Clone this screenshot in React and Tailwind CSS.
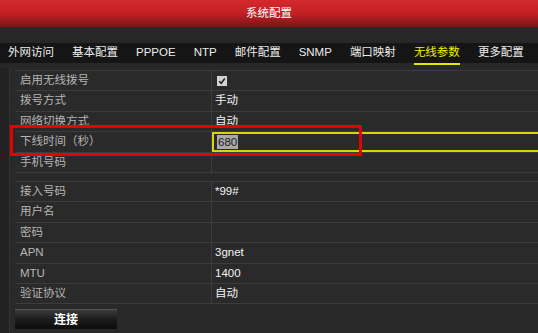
import React from "react";

const font = { fontFamily: '"Liberation Sans", "Noto Sans CJK SC", sans-serif' };

function Row({ label, children, highlight }) {
  return (
    <div className="flex h-[20.4px] border-t border-[#3c3c3c]">
      <div className="w-[197px] shrink-0 flex items-center pl-[5px] text-[11.5px] text-[#b4b4b4] border-r border-[#3c3c3c]">
        {label}
      </div>
      <div
        className={
          "flex-1 flex items-center pl-[3px] text-[11.5px] text-[#f2f2f2] " +
          (highlight ? "border-y-2 border-l-2 border-[#d6d600]" : "")
        }
      >
        {children}
      </div>
    </div>
  );
}

function Check() {
  return (
    <div className="ml-[2px] w-[10px] h-[10px] bg-[#d2d2d2] flex items-center justify-center">
      <svg width="8" height="8" viewBox="0 0 8 8">
        <path d="M1.2 4.2 L3.2 6.2 L6.8 1.6" stroke="#222" strokeWidth="1.6" fill="none" />
      </svg>
    </div>
  );
}

export default function App() {
  const tabs = ["外网访问", "基本配置", "PPPOE", "NTP", "邮件配置", "SNMP", "端口映射", "无线参数", "更多配置"];
  return (
    <div className="relative w-[538px] h-[333px] overflow-hidden bg-[#222222]" style={font}>
      <div className="h-[27px] flex items-center justify-center bg-gradient-to-b from-[#d42a2e] via-[#c21f24] to-[#7c1414] text-white text-[11.5px]">
        系统配置
      </div>
      <div className="h-[16px] bg-[#272727]" />
      <div className="h-[20px] bg-[#151515] flex items-center pl-[8px] gap-[18px] whitespace-nowrap">
        {tabs.map((t) => (
          <div key={t} className={"relative text-[11.5px] " + (t === "无线参数" ? "text-[#f0f000]" : "text-[#ececec]")}>
            {t}
            {t === "无线参数" && <div className="absolute left-0 right-0 bottom-[-3px] h-[2px] bg-[#e6e600]" />}
          </div>
        ))}
      </div>
      <div className="h-[5px] bg-[#282828]" />
      <div className="ml-[9px] h-[265px] bg-[#292929] border-l border-[#333] pl-[5px] pt-[2px]">
        <div className="border-b border-[#3c3c3c] bg-[#2a2a2a]">
          <Row label="启用无线拨号"><Check /></Row>
          <Row label="拨号方式">手动</Row>
          <Row label="网络切换方式">自动</Row>
          <Row label="下线时间（秒）" highlight>
            <span className="bg-[#a9a9a9] text-[#1a1a1a] leading-[14px] px-[1px]">680</span>
          </Row>
          <Row label="手机号码"></Row>
        </div>
        <div className="h-[8px]" />
        <div className="border-b border-[#3c3c3c] bg-[#2a2a2a]">
          <Row label="接入号码">*99#</Row>
          <Row label="用户名"></Row>
          <Row label="密码"></Row>
          <Row label="APN">3gnet</Row>
          <Row label="MTU">1400</Row>
          <Row label="验证协议">自动</Row>
        </div>
        <button className="mt-[5px] w-[102px] h-[20px] flex items-center justify-center text-[12px] font-bold text-white bg-gradient-to-b from-[#3c3c3c] via-[#1c1c1c] to-[#0c0c0c] border-t border-[#555]">
          连接
        </button>
      </div>
      <div className="absolute left-[10px] top-[125px] w-[352px] h-[31px] border-[3px] border-[#e50000]" />
    </div>
  );
}
